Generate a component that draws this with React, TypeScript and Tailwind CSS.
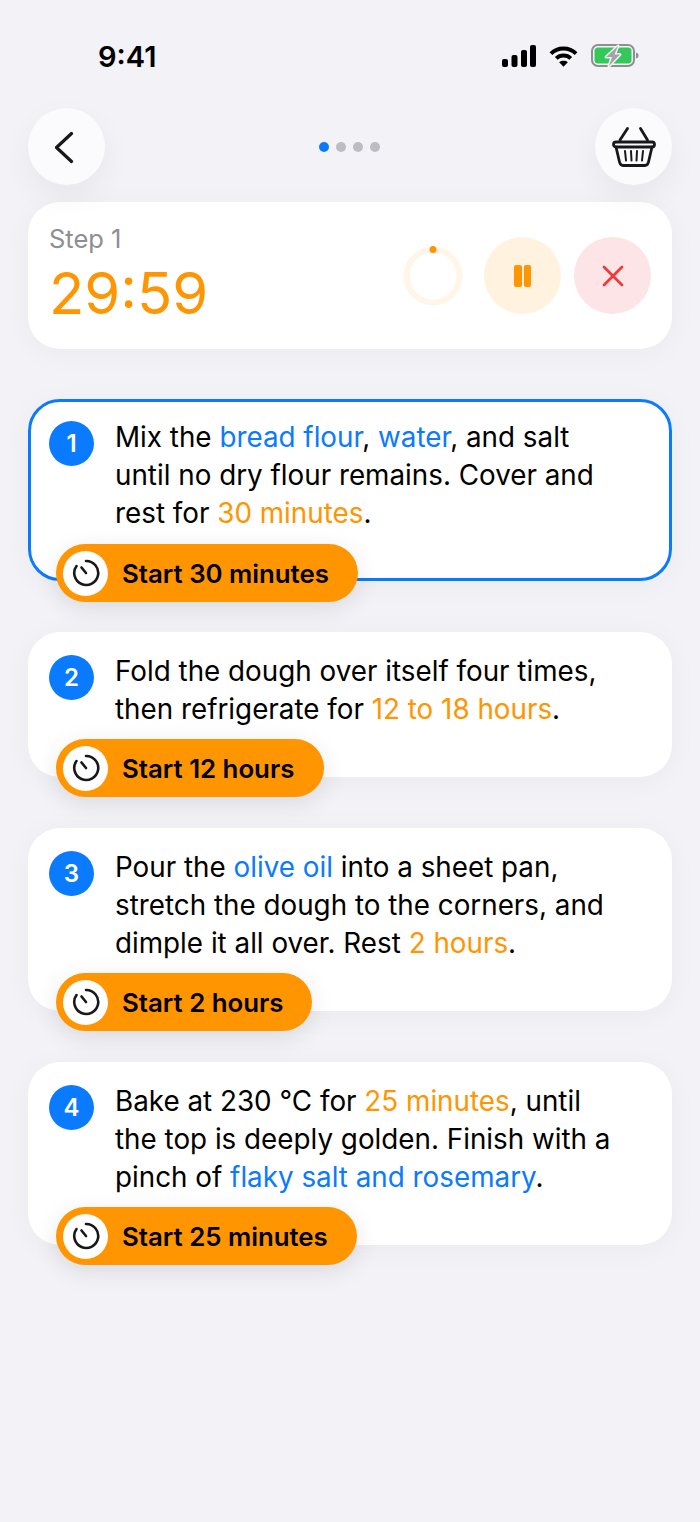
import { ReactNode } from 'react';

const B = ({ children }: { children: ReactNode }) => <span className="text-[#0a7aff]">{children}</span>;
const O = ({ children }: { children: ReactNode }) => <span className="text-[#ff9500]">{children}</span>;

const StatusBar = () => (
  <div className="flex h-[108px] items-start justify-between pl-[98px] pr-[61px] pt-[39px]">
    <span className="text-[29px] font-semibold leading-[36px] text-black">9:41</span>
    <div className="-mt-[1px] flex items-center gap-[13px] pt-[6px]">
      <svg width="34" height="22" viewBox="0 0 34 22" fill="#000">
        <rect x="0" y="14" width="6" height="8" rx="2" />
        <rect x="9.500" y="10" width="6" height="12" rx="2" />
        <rect x="19" y="5" width="6" height="17" rx="2" />
        <rect x="28" y="0" width="6" height="22" rx="2" />
      </svg>
      <svg width="29" height="22" viewBox="0 0 30 22" fill="none" stroke="#000" strokeWidth="4">
        <path d="M2 8.500 C9 1.500 21 1.500 28 8.500" />
        <path d="M7.500 13.500 C11.500 9.500 18.500 9.500 22.500 13.500" />
        <path d="M15 22 L10.500 17.500 C13 15.500 17 15.500 19.500 17.500 Z" fill="#000" stroke="none" />
      </svg>
      <svg width="48" height="24" viewBox="0 0 48 24" fill="none">
        <rect x="1" y="1" width="42" height="21" rx="6" stroke="#8e8e93" strokeWidth="2" />
        <rect x="3.500" y="3.500" width="37" height="16" rx="3.500" fill="#34c759" />
        <path d="M45 8.500 C47 9 47.500 10 47.500 11.500 C47.500 13 47 14 45 14.500 Z" fill="#8e8e93" />
        <path d="M27 2 L15 13 H21 L18 22 L29 10.500 H23.500 Z" fill="#a3a3a8" stroke="#f2f2f7" strokeWidth="3" strokeLinejoin="round" paintOrder="stroke" />
      </svg>
    </div>
  </div>
);

const Header = () => (
  <div className="flex items-center justify-between px-[28px]">
    <button className="flex h-[77px] w-[77px] items-center justify-center rounded-full bg-[#fbfbfd] shadow-[0_12px_32px_rgba(0,0,0,0.05)]">
      <svg width="24" height="36" viewBox="0 0 24 36" fill="none" stroke="#18181b" strokeWidth="3.200" strokeLinecap="round" strokeLinejoin="round">
        <path d="M16.500 4.500 L1.500 18.500 L16.500 32.500" />
      </svg>
    </button>
    <div className="-ml-[2px] flex items-center gap-[7px]">
      <span className="h-[10px] w-[10px] rounded-full bg-[#0a7aff]" />
      <span className="h-[10px] w-[10px] rounded-full bg-[#bcbcc2]" />
      <span className="h-[10px] w-[10px] rounded-full bg-[#bcbcc2]" />
      <span className="h-[10px] w-[10px] rounded-full bg-[#bcbcc2]" />
    </div>
    <button className="flex h-[77px] w-[77px] items-center justify-center rounded-full bg-[#fbfbfd] shadow-[0_12px_32px_rgba(0,0,0,0.05)]">
      <svg width="44" height="42" viewBox="0 0 44 42" fill="none" stroke="#18181b" strokeWidth="2.800" strokeLinecap="round" strokeLinejoin="round">
        <path d="M8 14 L15.500 2.500" />
        <path d="M35.500 14 L28.500 2.500" />
        <rect x="1.500" y="16" width="41" height="5" rx="2.500" />
        <path d="M4 21 L7.500 36 C8 38 9 39.500 11 39.500 H33 C35 39.500 36 38 36.500 36 L40 21" />
        <path d="M13 25 L14 34.500 M19 25 L19.500 34.500 M25 25 L24.500 34.500 M31 25 L30 34.500" strokeWidth="2" />
      </svg>
    </button>
  </div>
);

const TimerCard = () => (
  <div className="mx-[28px] mt-[17px] flex h-[147px] items-center justify-between rounded-[32px] bg-white px-[21px] shadow-[0_4px_30px_rgba(0,0,0,0.04)]">
    <div className="flex flex-col self-start pt-[21px]">
      <span className="text-[25.500px] leading-[32px] text-[#8e8e93]">Step 1</span>
      <span className="mt-[8px] text-[58px] leading-[60px] text-[#ff9500]">29:59</span>
    </div>
    <div className="flex items-center">
      <svg width="60" height="60" viewBox="0 0 60 60" fill="none">
        <circle cx="30" cy="30" r="26.500" stroke="#fff5e8" strokeWidth="6" />
        <circle cx="30" cy="3.500" r="3.500" fill="#ff9500" />
      </svg>
      <div className="ml-[21px] flex h-[77px] w-[77px] items-center justify-center rounded-full bg-[#fff3e0]">
        <div className="flex gap-[2px]">
          <span className="h-[22px] w-[7.500px] rounded-[2px] bg-[#ff9500]" />
          <span className="h-[22px] w-[7.500px] rounded-[2px] bg-[#ff9500]" />
        </div>
      </div>
      <div className="ml-[13px] flex h-[77px] w-[77px] items-center justify-center rounded-full bg-[#fde4e6]">
        <svg width="24" height="24" viewBox="0 0 24 24" fill="none" stroke="#ef3b36" strokeWidth="2.800" strokeLinecap="round">
          <path d="M3 3 L21 21 M21 3 L3 21" />
        </svg>
      </div>
    </div>
  </div>
);

const TimerPill = ({ label, width, active }: { label: string; width: string; active?: boolean }) => (
  <div className={`relative z-10 ml-[28px] mt-[11px] flex h-[58px] items-center rounded-full bg-[#ff9500] pl-[7px] shadow-[0_6px_24px_rgba(0,0,0,0.10)] ${active ? '-mb-[21px]' : '-mb-[20px]'} ${width}`}>
    <div className="flex h-[45px] w-[45px] items-center justify-center rounded-full bg-white">
      <svg width="28" height="28" viewBox="0 0 28 28" fill="none" stroke="#18181b" strokeWidth="2.600" strokeLinecap="round">
        <path d="M14 2 A12 12 0 1 1 4.500 7" />
        <path d="M9.500 8.500 L14 14" />
      </svg>
    </div>
    <span className="ml-[14px] pt-[1px] text-[25.800px] font-semibold leading-none text-black">{label}</span>
  </div>
);

const StepCard = ({ n, active, pill, pillWidth, children }: { n: number; active?: boolean; pill: string; pillWidth: string; children: ReactNode }) => (
  <div className={`mx-[28px] rounded-[32px] bg-white shadow-[0_4px_30px_rgba(0,0,0,0.04)] ${active ? 'outline outline-[3px] -outline-offset-[3px] outline-[#0a7aff]' : ''}`}>
    <div className="flex pl-[21px] pt-[20px]">
      <div className={`flex h-[45px] w-[45px] shrink-0 items-center justify-center rounded-full bg-[#0a7aff] text-[24px] font-semibold text-white ${active ? 'mt-[2px]' : 'mt-[3px]'}`}>{n}</div>
      <p className={`ml-[21px] w-[510px] text-[27.800px] leading-[38px] text-black ${active ? '-mt-[1px] mb-[1px]' : ''}`}>{children}</p>
    </div>
    <TimerPill label={pill} width={pillWidth} active={active} />
  </div>
);

export default function App() {
  return (
    <div className="h-[1522px] w-[700px] overflow-hidden bg-[#f2f2f7] font-['Inter',sans-serif]">
      <StatusBar />
      <Header />
      <TimerCard />
      <div className="mt-[50px] flex flex-col gap-[51px]">
        <StepCard n={1} active pill="Start 30 minutes" pillWidth="w-[302px]">
          Mix the <B>bread flour</B>, <B>water</B>, and salt until no dry flour remains. Cover and rest for <O>30 minutes</O>.
        </StepCard>
        <StepCard n={2} pill="Start 12 hours" pillWidth="w-[268px]">
          Fold the dough over itself four times, then refrigerate for <O>12 to 18 hours</O>.
        </StepCard>
        <StepCard n={3} pill="Start 2 hours" pillWidth="w-[256px]">
          Pour the <B>olive oil</B> into a sheet pan, stretch the dough to the corners, and dimple it all over. Rest <O>2 hours</O>.
        </StepCard>
        <StepCard n={4} pill="Start 25 minutes" pillWidth="w-[301px]">
          Bake at 230 °C for <O>25 minutes</O>, until the top is deeply golden. Finish with a pinch of <B>flaky salt and rosemary</B>.
        </StepCard>
      </div>
    </div>
  );
}
